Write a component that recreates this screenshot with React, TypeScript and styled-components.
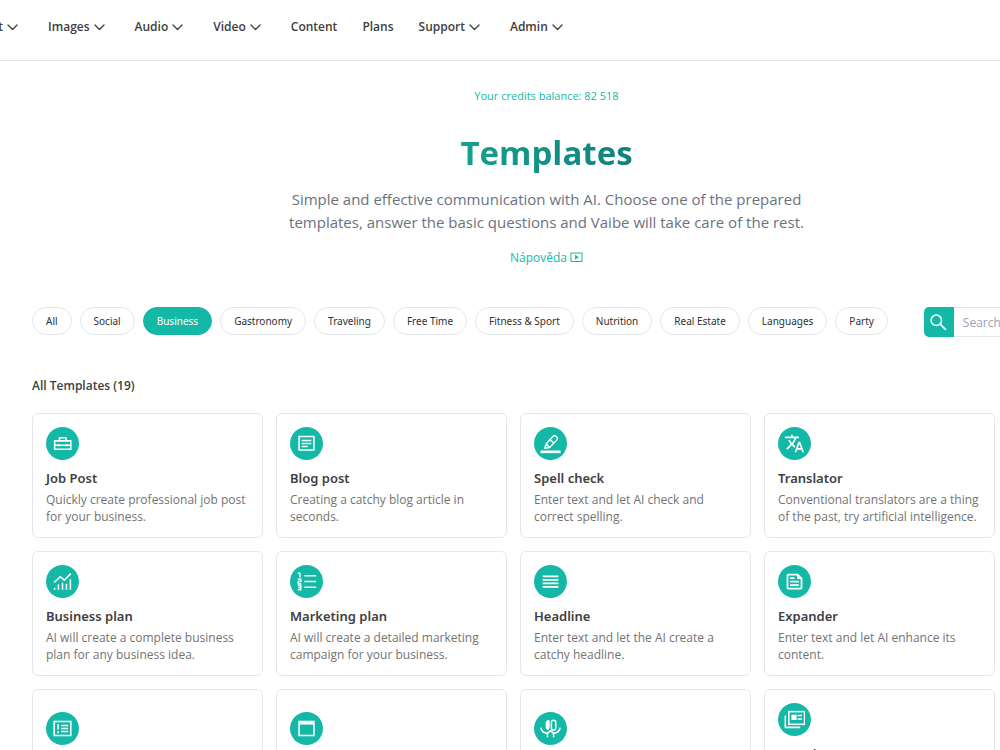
import React from 'react';
import styled, { createGlobalStyle } from 'styled-components';
import { MdTranslate, MdReorder, MdOutlineFeed } from 'react-icons/md';

const GlobalStyle = createGlobalStyle`
  *, *::before, *::after { box-sizing: border-box; }
  body {
    margin: 0;
    background: #fff;
    color: #404040;
    font-family: 'Open Sans', 'Noto Sans', sans-serif;
    font-size: 12px;
  }
  button, input { font-family: inherit; }
`;

const Page = styled.div`
  overflow: hidden;
`;

const Header = styled.header`
  display: flex;
  align-items: center;
  height: 61px;
  padding-bottom: 6px;
  border-bottom: 1px solid #e5e7eb;
`;

const Nav = styled.nav`
  display: flex;
  flex: none;
  gap: 25px;
  margin-left: -22px;
`;

const NavLink = styled.a`
  display: flex;
  align-items: center;
  color: #404040;
  font-weight: 600;
  line-height: 20px;
  text-decoration: none;
`;

const NavButton = styled(NavLink).attrs({ as: 'button', type: 'button' })`
  padding: 0;
  border: 0;
  background: none;
  font-size: 12px;
`;

const Hero = styled.section`
  display: flex;
  flex-direction: column;
  align-items: center;
  padding: 27px 0 0 93px;
  text-align: center;
`;

const Balance = styled.p`
  margin: 0;
  color: #14b8a6;
  font-size: 11px;
  line-height: 16px;
`;

const Title = styled.h1`
  margin: 24px 0 0;
  background: linear-gradient(to right, #14a08f, #10827a);
  background-clip: text;
  color: transparent;
  font-size: 33px;
  font-weight: 700;
  line-height: 50px;
`;

const Lead = styled.p`
  max-width: 530px;
  margin: 10px 0 0;
  color: #6b7280;
  font-size: 15px;
  line-height: 23px;
`;

const HelpLink = styled.a`
  display: flex;
  align-items: center;
  gap: 3px;
  margin-top: 15px;
  color: #14b8a6;
  font-size: 12px;
  line-height: 18px;
  text-decoration: none;
`;

const Toolbar = styled.div`
  display: flex;
  align-items: flex-start;
  gap: 36px;
  padding: 40px 0 0 32px;
`;

const Filters = styled.div`
  display: flex;
  flex: none;
  gap: 8px;
`;

const Pill = styled.button<{ $active?: boolean }>`
  height: 28px;
  padding: 0 13px;
  border: 1px solid ${(p) => (p.$active ? '#14b8a6' : '#e5e7eb')};
  border-radius: 14px;
  background: ${(p) => (p.$active ? '#14b8a6' : '#fff')};
  color: ${(p) => (p.$active ? '#fff' : '#303030')};
  font-family: 'Noto Sans', sans-serif;
  font-size: 10px;
  line-height: 16px;
  white-space: nowrap;
`;

const SearchForm = styled.form`
  display: flex;
  flex: none;
  height: 30px;
`;

const SearchButton = styled.button`
  display: flex;
  align-items: center;
  justify-content: center;
  width: 30px;
  padding: 0;
  border: 0;
  border-radius: 5px 0 0 5px;
  background: #14b8a6;
  color: #fff;
`;

const SearchInput = styled.input`
  width: 165px;
  padding: 0 9px;
  border: 1px solid #e5e7eb;
  border-left: 0;
  border-radius: 0 5px 5px 0;
  font-size: 12px;
  &::placeholder { color: #9ca3af; }
`;

const SectionTitle = styled.h2`
  margin: 40px 0 0 32px;
  font-size: 12px;
  font-weight: 600;
  line-height: 18px;
`;

const Grid = styled.div`
  display: grid;
  grid-template-columns: repeat(4, minmax(0, 1fr));
  gap: 13px;
  padding: 18px 5px 32px 32px;
`;

const Card = styled.a`
  display: flex;
  flex-direction: column;
  justify-content: center;
  min-height: 125px;
  padding: 13px 13px 12px;
  border: 1px solid #e5e7eb;
  border-radius: 6px;
  color: inherit;
  text-decoration: none;
`;

const Badge = styled.span`
  display: flex;
  align-items: center;
  justify-content: center;
  width: 33px;
  height: 33px;
  border-radius: 50%;
  background: #14b8a6;
  color: #fff;
`;

const CardTitle = styled.h3`
  margin: 8px 0 0;
  font-family: 'Noto Sans', sans-serif;
  font-size: 13px;
  font-weight: 600;
  line-height: 20px;
`;

const CardText = styled.p`
  margin: 3px 0 0;
  color: #737373;
  font-size: 12px;
  line-height: 17px;
`;

const Glyph = styled.svg.attrs({
  width: 21,
  height: 21,
  viewBox: '0 0 24 24',
  fill: 'none',
  stroke: 'currentColor',
  strokeWidth: 1.75,
  'aria-hidden': true,
})``;

const Chevron = () => (
  <svg width="20" height="20" viewBox="0 0 20 20" fill="none" stroke="currentColor" strokeWidth="1.400" strokeLinecap="round" strokeLinejoin="round" aria-hidden="true">
    <path d="M5 8 9.500 12.500 14 8" />
  </svg>
);

const SearchIcon = () => (
  <Glyph>
    <circle cx="9.500" cy="9.500" r="6" />
    <path d="M14 14l6.500 6.500" strokeWidth="2" />
  </Glyph>
);

const VideoIcon = () => (
  <svg width="13" height="12" viewBox="0 0 13 12" aria-hidden="true">
    <rect x="1" y="1" width="11" height="8.500" fill="none" stroke="currentColor" />
    <path d="M5 2.800v5l3.800-2.500z" fill="currentColor" />
  </svg>
);

const ToolboxIcon = () => (
  <Glyph>
    <path d="M3 9h18.500v9.500H3zM8.500 9V5.500h7.500V9M3 14h18.500M7.500 12.500v3M17 12.500v3" />
  </Glyph>
);

const ArticleIcon = () => (
  <Glyph>
    <path d="M3.500 4h17v15.500h-17zM6.500 8.500h11M6.500 12h11M6.500 15.500h7" />
  </Glyph>
);

const PenIcon = () => (
  <Glyph>
    <path d="M7 12.500l8.200-9c.8-.8 1.800-.8 2.600 0l1.700 1.700c.8.8.8 1.800 0 2.600L11 16.500 5.500 17.500zM7 12.500l4 4M11.500 7.500l4 4" strokeWidth="1.600" strokeLinejoin="round" />
    <path d="M.5 21.500h23" strokeWidth="3" />
  </Glyph>
);

const GrowthIcon = () => (
  <Glyph>
    <path d="M2.500 13l7-6.500 4.500 4 7.500-7.500" />
    <path d="M3 21.500v-2.500M7.300 21.500v-6M12 21.500v-8M16.500 21.500v-7M21 21.500V9.500" />
  </Glyph>
);

const NumberedListIcon = () => (
  <Glyph>
    <path d="M9.500 5.500H23M9.500 12H23M9.500 18.500H23" />
    <path d="M2 2.500h2.500v5M2 9.500h3.500v2.500H2.500v2.500h3.500M2 16.500h3.500v5H2M2.500 19h3" strokeWidth="1.600" />
  </Glyph>
);

const SurveyIcon = () => (
  <Glyph>
    <rect x="2.500" y="4" width="19" height="16" />
    <path d="M7 7v6M7 15v2.500M10.500 8.500h8M10.500 12h8M10.500 15.500h8" />
  </Glyph>
);

const WindowIcon = () => (
  <Glyph>
    <rect x="3.500" y="4" width="17" height="16" />
    <path d="M3.500 6h17" strokeWidth="3" />
  </Glyph>
);

const MicsIcon = () => (
  <Glyph>
    <path d="M10.500 3v7.500l-1 3c-1.500-.3-2.500-1.200-2.500-3V5c0-1.500 1.500-2.500 3.500-2z" fill="currentColor" strokeWidth="1" />
    <rect x="13" y="2.500" width="5" height="11.500" rx="2.500" />
    <path d="M1 11c.5 3.800 3 6 7.500 6.500V22M23 11c-.5 3.800-3 6-7.500 6.500V22M8.500 17.500l3.500-3 3.500 3" />
  </Glyph>
);

const NewsStackIcon = () => (
  <Glyph>
    <path d="M1.500 7.500V21h17" />
    <rect x="5.500" y="3" width="18" height="14.500" />
    <path d="M8.500 6.500h6v6h-6z" fill="currentColor" stroke="none" />
    <path d="M15.500 7.500h5M15.500 11.500h5" />
  </Glyph>
);

const navItems = [
  { label: 'Text', menu: true },
  { label: 'Images', menu: true },
  { label: 'Audio', menu: true },
  { label: 'Video', menu: true },
  { label: 'Content', menu: false },
  { label: 'Plans', menu: false },
  { label: 'Support', menu: true },
  { label: 'Admin', menu: true },
];

const categories = [
  'All', 'Social', 'Business', 'Gastronomy', 'Traveling', 'Free Time',
  'Fitness & Sport', 'Nutrition', 'Real Estate', 'Languages', 'Party',
];

const templates = [
  { title: 'Job Post', text: 'Quickly create professional job post for your business.', icon: <ToolboxIcon /> },
  { title: 'Blog post', text: 'Creating a catchy blog article in seconds.', icon: <ArticleIcon /> },
  { title: 'Spell check', text: 'Enter text and let AI check and correct spelling.', icon: <PenIcon /> },
  { title: 'Translator', text: 'Conventional translators are a thing of the past, try artificial intelligence.', icon: <MdTranslate size={21} /> },
  { title: 'Business plan', text: 'AI will create a complete business plan for any business idea.', icon: <GrowthIcon /> },
  { title: 'Marketing plan', text: 'AI will create a detailed marketing campaign for your business.', icon: <NumberedListIcon /> },
  { title: 'Headline', text: 'Enter text and let the AI create a catchy headline.', icon: <MdReorder size={21} /> },
  { title: 'Expander', text: 'Enter text and let AI enhance its content.', icon: <MdOutlineFeed size={21} /> },
  { title: 'Survey', text: 'AI will prepare a list of questions for your customers.', icon: <SurveyIcon /> },
  { title: 'Landing page', text: 'Enter your topic and let AI write the text for your page.', icon: <WindowIcon /> },
  { title: 'Interview', text: 'Let AI prepare the questions for your next interview.', icon: <MicsIcon /> },
  { title: 'Newsletter', text: 'Enter the topic of your newsletter and let AI write an engaging text for your readers in seconds.', icon: <NewsStackIcon /> },
];

export default function App() {
  return (
    <Page>
      <GlobalStyle />
      <Header>
        <Nav aria-label="Main">
          {navItems.map((item) =>
            item.menu ? (
              <NavButton key={item.label}>
                {item.label}
                <Chevron />
              </NavButton>
            ) : (
              <NavLink key={item.label} href="#">{item.label}</NavLink>
            ),
          )}
        </Nav>
      </Header>
      <main>
        <Hero>
          <Balance>Your credits balance: 82 518</Balance>
          <Title>Templates</Title>
          <Lead>
            Simple and effective communication with AI. Choose one of the prepared
            templates, answer the basic questions and Vaibe will take care of the rest.
          </Lead>
          <HelpLink href="#">
            Nápověda
            <VideoIcon />
          </HelpLink>
        </Hero>
        <Toolbar>
          <Filters>
            {categories.map((name) => (
              <Pill key={name} type="button" $active={name === 'Business'}>{name}</Pill>
            ))}
          </Filters>
          <SearchForm role="search">
            <SearchButton type="button" aria-label="Search">
              <SearchIcon />
            </SearchButton>
            <SearchInput type="text" placeholder="Search" aria-label="Search templates" />
          </SearchForm>
        </Toolbar>
        <SectionTitle>All Templates (19)</SectionTitle>
        <Grid>
          {templates.map((t) => (
            <Card key={t.title} href="#">
              <Badge>{t.icon}</Badge>
              <CardTitle>{t.title}</CardTitle>
              <CardText>{t.text}</CardText>
            </Card>
          ))}
        </Grid>
      </main>
    </Page>
  );
}
